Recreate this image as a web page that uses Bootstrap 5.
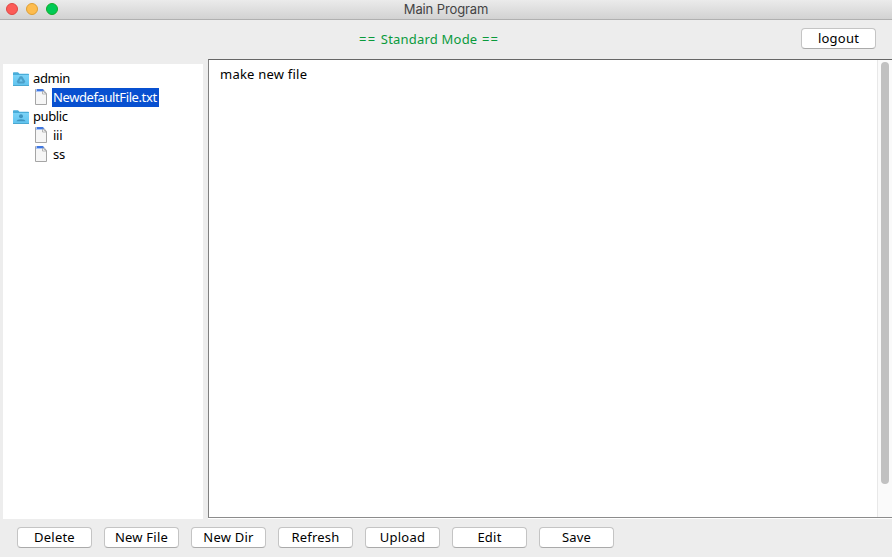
<!DOCTYPE html>
<html lang="en">
<head>
<meta charset="utf-8">
<title>Main Program</title>
<link href="https://cdn.jsdelivr.net/npm/bootstrap@5.3.0/dist/css/bootstrap.min.css" rel="stylesheet">
<style>
body{height:557px;background:#ededed;color:#000;font:13px/19px "Noto Sans","Open Sans",sans-serif}
.titlebar{height:20px;background:linear-gradient(#ebebeb,#d2d2d2);border-bottom:1px solid #b0b0b0;font:13px/19px Inter,Roboto,sans-serif;color:#444;letter-spacing:-.12px}
.lights{left:6px;top:3px;gap:8px}
.light{width:12px;height:12px;border-radius:50%;border:1px solid}
.light-r{background:#fc5b57;border-color:#df4744}
.light-y{background:#fdbc4e;border-color:#de9f34}
.light-g{background:#00ca56;border-color:#12ac28}
.topbar{height:39px;padding:8px 16px 0 0}
.mode{color:#0a9a3c;padding-left:359px;line-height:23px;letter-spacing:.2px}
.mode-eq{letter-spacing:1.2px}
.btn-mac{width:75px;height:21px;padding:0 0 1px;line-height:18px;font-size:13px;background:#fff;color:#000;border:1px solid #c4c4c4;border-bottom-color:#aaa;border-radius:4px;letter-spacing:.22px}
.tree{width:200px;margin:5px 5px 0 3px;padding:5px 0 0 10px;background:#fff}
.tree-row{height:19px}
.tree-row svg{flex:none;display:block;margin-right:5px}
.tree-row .folder-icon{margin-right:3px}
.tree-row span{padding:0 2px 0 1px;white-space:nowrap}
.folder-name{letter-spacing:-.4px}
.leaf{padding-left:22px}
.leaf svg{position:relative;top:-1px}
.leaf-name{letter-spacing:-.25px}
.picked{background:#0850d0;color:#fff;letter-spacing:-.4px}
.editor{border:1px solid #666;border-left-color:#808080;border-bottom-color:#8c8c8c;border-right:0;background:#fff;margin-bottom:1px;box-shadow:0 1px #fff}
.doc{padding:5px 11px;letter-spacing:.22px}
.track{width:15px;background:#fafafa;border-left:1px solid #e8e8e8;padding:2px 3px 0}
.thumb{width:8px;height:422px;border-radius:4px;background:#c1c1c1}
.actions{height:38px;padding:8px 17px;gap:12px}
</style>
<script src="https://cdn.jsdelivr.net/npm/bootstrap@5.3.0/dist/js/bootstrap.bundle.min.js"></script>
</head>
<body class="d-flex flex-column overflow-hidden">
<svg class="position-absolute" width="0" height="0">
  <defs>
    <linearGradient id="fold" x2="0" y2="1"><stop stop-color="#7bd3f7"/><stop offset="1" stop-color="#62c4ef"/></linearGradient>
    <symbol id="folder" viewBox="0 0 16 14"><path d="M0 1Q0 .3.7.3H5L6.5 1.8H15.3Q16 1.8 16 2.5V13.5H0Z" fill="#49add9"/><path d="M0 3H16V13.2H0Z" fill="url(#fold)"/><path d="M0 13.5H16" stroke="#4ba8d0"/></symbol>
    <symbol id="page" viewBox="0 0 12 16"><path d="M.5.5H8L11.5 4.5V15.5H.5Z" fill="#f6f6f6" stroke="#a5a5a5"/><path d="M1 .2H8L9.5 3H1Z" fill="#a9c6fb"/><path d="M2 0H8L9 2H2Z" fill="#3f76e0"/><path d="M7.5 2V5H11.5Z" fill="#fff" stroke="#a5a5a5" stroke-width=".8"/></symbol>
  </defs>
</svg>
<header class="titlebar position-relative text-center flex-shrink-0">
  <div class="lights position-absolute d-flex"><i class="light light-r"></i><i class="light light-y"></i><i class="light light-g"></i></div>
  Main Program
</header>
<div class="topbar d-flex justify-content-between align-items-start flex-shrink-0">
  <div class="mode"><span class="mode-eq">== </span>Standard Mode<span class="mode-eq"> ==</span></div>
  <button class="btn btn-mac">logout</button>
</div>
<main class="d-flex flex-grow-1">
  <nav class="tree">
    <div class="tree-row d-flex align-items-center"><svg class="folder-icon" width="16" height="14"><use href="#folder"/><path d="M6.8 4.3H9.2L12.3 9.5L11.1 11.6H4.9L3.7 9.5Z" fill="#4a9fc9"/><path d="M8 6.4L6.2 9.4H9.8Z" fill="#70c9ef"/></svg><span class="folder-name">admin</span></div>
    <div class="tree-row leaf d-flex align-items-center"><svg width="12" height="16"><use href="#page"/></svg><span class="picked">NewdefaultFile.txt</span></div>
    <div class="tree-row d-flex align-items-center"><svg class="folder-icon" width="16" height="14"><use href="#folder"/><circle cx="8" cy="6.3" r="2" fill="#3f94bf"/><path d="M3.5 11.3Q4 9.3 8 9.3T12.5 11.3Z" fill="#3f94bf"/></svg><span class="folder-name">public</span></div>
    <div class="tree-row leaf d-flex align-items-center"><svg width="12" height="16"><use href="#page"/></svg><span class="leaf-name">iii</span></div>
    <div class="tree-row leaf d-flex align-items-center"><svg width="12" height="16"><use href="#page"/></svg><span class="leaf-name">ss</span></div>
  </nav>
  <section class="editor d-flex flex-grow-1">
    <div class="doc flex-grow-1">make new file</div>
    <div class="track"><div class="thumb"></div></div>
  </section>
</main>
<footer class="actions d-flex flex-shrink-0">
  <button class="btn btn-mac">Delete</button>
  <button class="btn btn-mac">New File</button>
  <button class="btn btn-mac">New Dir</button>
  <button class="btn btn-mac">Refresh</button>
  <button class="btn btn-mac">Upload</button>
  <button class="btn btn-mac">Edit</button>
  <button class="btn btn-mac">Save</button>
</footer>
</body>
</html>
